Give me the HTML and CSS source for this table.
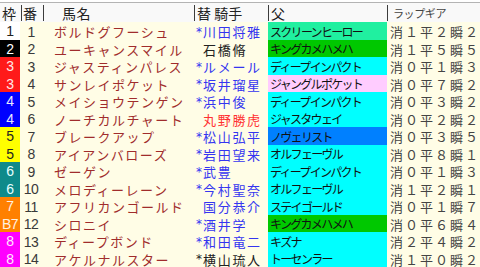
FILE: index.html
```html
<!DOCTYPE html>
<html lang="ja">
<head>
<meta charset="utf-8">
<link rel="stylesheet" href="styles.css">
</head>
<body>
<div class="sheet">
  <div class="topline"></div>
  <div class="row hdr">
    <div class="hc h-waku">枠</div>
    <div class="hc h-ban sep">番</div>
    <div class="hc h-name sep">馬名</div>
    <div class="hc h-jockey sep">替 騎手</div>
    <div class="hc h-sire sep">父</div>
    <div class="hc h-lap sep">ラップギア</div>
  </div>

  <div class="row"><div class="waku"><span class="wk w1">1</span></div><div class="ban">1</div><div class="name">ボルドグフーシュ</div><div class="jockey blue"><span class="star">*</span>川田将雅</div><div class="sire"><span class="sc s-mint">スクリーンヒーロー</span></div><div class="lap">消１平２瞬２</div></div>
  <div class="row"><div class="waku"><span class="wk w2">2</span></div><div class="ban">2</div><div class="name">ユーキャンスマイル</div><div class="jockey black"><span class="star"></span>石橋脩</div><div class="sire"><span class="sc s-green">キングカメハメハ</span></div><div class="lap">消１平５瞬５</div></div>
  <div class="row"><div class="waku"><span class="wk w3">3</span></div><div class="ban">3</div><div class="name">ジャスティンパレス</div><div class="jockey blue"><span class="star">*</span>ルメール</div><div class="sire"><span class="sc s-cyan">ディープインパクト</span></div><div class="lap">消０平１瞬３</div></div>
  <div class="row"><div class="waku"><span class="wk w3">3</span></div><div class="ban">4</div><div class="name">サンレイポケット</div><div class="jockey blue"><span class="star">*</span>坂井瑠星</div><div class="sire"><span class="sc s-pink">ジャングルポケット</span></div><div class="lap">消０平７瞬２</div></div>
  <div class="row"><div class="waku"><span class="wk w4">4</span></div><div class="ban">5</div><div class="name">メイショウテンゲン</div><div class="jockey blue"><span class="star">*</span>浜中俊</div><div class="sire"><span class="sc s-cyan">ディープインパクト</span></div><div class="lap">消０平３瞬２</div></div>
  <div class="row"><div class="waku"><span class="wk w4">4</span></div><div class="ban">6</div><div class="name">ノーチカルチャート</div><div class="jockey red"><span class="star"></span>丸野勝虎</div><div class="sire"><span class="sc s-cyan">ジャスタウェイ</span></div><div class="lap">消０平２瞬２</div></div>
  <div class="row"><div class="waku"><span class="wk w5">5</span></div><div class="ban">7</div><div class="name">ブレークアップ</div><div class="jockey blue"><span class="star">*</span>松山弘平</div><div class="sire"><span class="sc s-blue">ノヴェリスト</span></div><div class="lap">消０平３瞬５</div></div>
  <div class="row"><div class="waku"><span class="wk w5">5</span></div><div class="ban">8</div><div class="name">アイアンバローズ</div><div class="jockey blue"><span class="star">*</span>岩田望来</div><div class="sire"><span class="sc s-cyan">オルフェーヴル</span></div><div class="lap">消０平８瞬１</div></div>
  <div class="row"><div class="waku"><span class="wk w6">6</span></div><div class="ban">9</div><div class="name">ゼーゲン</div><div class="jockey blue"><span class="star">*</span>武豊</div><div class="sire"><span class="sc s-cyan">ディープインパクト</span></div><div class="lap">消０平１瞬３</div></div>
  <div class="row"><div class="waku"><span class="wk w6">6</span></div><div class="ban">10</div><div class="name">メロディーレーン</div><div class="jockey blue"><span class="star">*</span>今村聖奈</div><div class="sire"><span class="sc s-cyan">オルフェーヴル</span></div><div class="lap">消１平２瞬１</div></div>
  <div class="row"><div class="waku"><span class="wk w7">7</span></div><div class="ban">11</div><div class="name">アフリカンゴールド</div><div class="jockey blue"><span class="star"></span>国分恭介</div><div class="sire"><span class="sc s-cyan">ステイゴールド</span></div><div class="lap">消０平１瞬７</div></div>
  <div class="row"><div class="waku"><span class="wk w7">B7</span></div><div class="ban">12</div><div class="name">シロニイ</div><div class="jockey blue"><span class="star">*</span>酒井学</div><div class="sire"><span class="sc s-green">キングカメハメハ</span></div><div class="lap">消０平６瞬４</div></div>
  <div class="row"><div class="waku"><span class="wk w8">8</span></div><div class="ban">13</div><div class="name">ディープボンド</div><div class="jockey blue"><span class="star">*</span>和田竜二</div><div class="sire"><span class="sc s-cyan">キズナ</span></div><div class="lap">消２平４瞬２</div></div>
  <div class="row"><div class="waku"><span class="wk w8">8</span></div><div class="ban">14</div><div class="name">アケルナルスター</div><div class="jockey black"><span class="star">*</span>横山琉人</div><div class="sire"><span class="sc s-cyan">トーセンラー</span></div><div class="lap">消１平０瞬２</div></div>
</div>
</body>
</html>
```
FILE: styles.css
```css
html, body {
  margin: 0;
  padding: 0;
  background: #fffde6;
}
body {
  font-family: "Noto Sans CJK JP", "Noto Sans", sans-serif;
  width: 480px;
  height: 267px;
  overflow: hidden;
}
.sheet {
  display: flex;
  flex-direction: column;
  width: 480px;
}
.topline {
  height: 2px;
  background: #ffffff;
  border-bottom: 1px solid #b4b4b4;
}
.row {
  display: grid;
  grid-template-columns: 21px 22px 151px 74px 119px 93px;
  height: 17.5px;
  align-items: stretch;
}
.hdr {
  height: 19px;
  background: #f9f9f9;
  color: #222;
  font-size: 14px;
}
.hc {
  display: flex;
  align-items: center;
  margin: 2px 0 1px;
  line-height: 1;
}
.sep {
  border-left: 1px solid #3c3c3c;
}
.h-waku { padding-left: 2px; }
.h-ban { padding-left: 1px; }
.h-name { padding-left: 18px; letter-spacing: 0.5px; }
.h-jockey { padding-left: 2px; white-space: pre; }
.h-sire { padding-left: 2px; }
.h-lap { padding-left: 5px; font-size: 11px; color: #444; letter-spacing: -0.4px; }

.waku {
  padding: 0 1px 1px 0;
}
.wk {
  display: flex;
  height: 100%;
  align-items: center;
  justify-content: center;
  font-family: "Liberation Sans", sans-serif;
  font-size: 14px;
  color: #fff;
  letter-spacing: -0.5px;
}
.w1 { background: #ffffff; color: #222; }
.w2 { background: #000000; color: #fff; }
.w3 { background: #ff1a1a; color: #ffe8e8; }
.w4 { background: #0000ff; color: #e8e8ff; }
.w5 { background: #ffff00; color: #222; }
.w6 { background: #0e8a8a; color: #e6ffff; }
.w7 { background: #ff8000; color: #fff2e0; }
.w8 { background: #ff00ff; color: #ffe6ff; }

.ban {
  display: flex;
  align-items: center;
  justify-content: center;
  font-family: "Liberation Sans", sans-serif;
  font-size: 14px;
  color: #3a3a3a;
  letter-spacing: -0.6px;
  padding-right: 2px;
}
.name {
  display: flex;
  align-items: center;
  padding-left: 11px;
  font-size: 13px;
  letter-spacing: 1.5px;
  color: #a02c2c;
  white-space: nowrap;
}
.jockey {
  display: flex;
  align-items: center;
  padding-left: 2px;
  font-size: 13px;
  letter-spacing: 1.7px;
  white-space: nowrap;
}
.star {
  display: inline-block;
  width: 7px;
  font-family: "DejaVu Sans", sans-serif;
  font-size: 12px;
  letter-spacing: 0;
  text-align: left;
  vertical-align: -2px;
}
.blue { color: #3535f0; }
.black { color: #222; }
.red { color: #ff3030; }

.sire {
  padding-bottom: 1px;
}
.sc {
  display: flex;
  height: 100%;
  align-items: center;
  padding-left: 2px;
  font-size: 12px;
  letter-spacing: -1.7px;
  color: #111;
  white-space: nowrap;
}
.s-mint { background: #20f0a0; }
.s-green { background: #00c800; }
.s-cyan { background: #00ffff; }
.s-pink { background: #ffccff; }
.s-blue { background: #0080ff; }

.lap {
  display: flex;
  align-items: center;
  padding-left: 3px;
  font-size: 13px;
  letter-spacing: 2px;
  color: #444;
  white-space: nowrap;
}
```
